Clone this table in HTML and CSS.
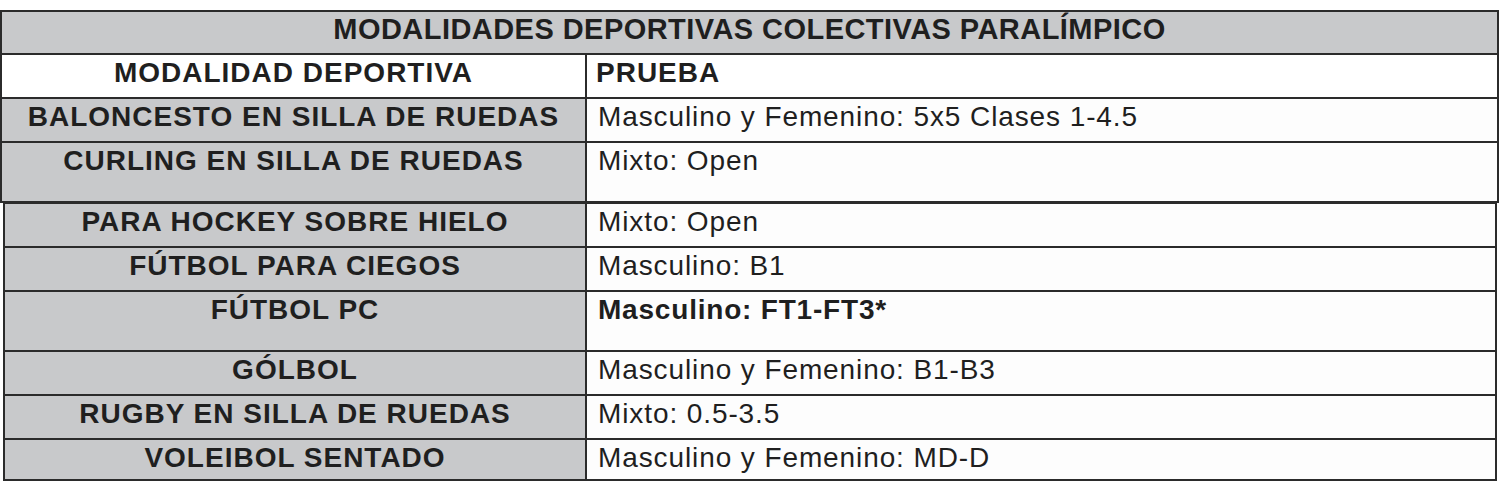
FILE: index.html
```html
<!DOCTYPE html>
<html lang="es">
<head>
<meta charset="utf-8">
<title>Modalidades deportivas colectivas paralímpico</title>
<link rel="stylesheet" href="styles.css">
</head>
<body>
<div class="page">
  <div class="grid grid-top">
    <div class="cell title">MODALIDADES DEPORTIVAS COLECTIVAS PARALÍMPICO</div>
    <div class="cell head center r-h">MODALIDAD DEPORTIVA</div>
    <div class="cell head left r-h">PRUEBA</div>
    <div class="cell sport r-n">BALONCESTO EN SILLA DE RUEDAS</div>
    <div class="cell test r-n">Masculino y Femenino: 5x5 Clases 1-4.5</div>
    <div class="cell sport r-t">CURLING EN SILLA DE RUEDAS</div>
    <div class="cell test r-t">Mixto: Open</div>
  </div>
  <div class="grid grid-bottom">
    <div class="cell sport r-n">PARA HOCKEY SOBRE HIELO</div>
    <div class="cell test r-n">Mixto: Open</div>
    <div class="cell sport r-n">FÚTBOL PARA CIEGOS</div>
    <div class="cell test r-n">Masculino: B1</div>
    <div class="cell sport r-t">FÚTBOL PC</div>
    <div class="cell test strong r-t">Masculino: FT1-FT3*</div>
    <div class="cell sport r-n">GÓLBOL</div>
    <div class="cell test r-n">Masculino y Femenino: B1-B3</div>
    <div class="cell sport r-n">RUGBY EN SILLA DE RUEDAS</div>
    <div class="cell test r-n">Mixto: 0.5-3.5</div>
    <div class="cell sport r-l">VOLEIBOL SENTADO</div>
    <div class="cell test r-l">Masculino y Femenino: MD-D</div>
  </div>
</div>
</body>
</html>
```
FILE: styles.css
```css
* { box-sizing: border-box; }
html, body {
  margin: 0;
  padding: 0;
  background: #ffffff;
}
body {
  font-family: "Liberation Sans", Arial, sans-serif;
  color: #1f1f1f;
}
.page {
  padding-top: 10px;
  width: 1500px;
  height: 484px;
}
.grid {
  display: grid;
  background: #2b2b2b;
  gap: 2px;
  padding: 2px;
}
.grid-top {
  width: 1499px;
  grid-template-columns: 583px 1fr;
}
.grid-bottom {
  width: 1494px;
  margin-left: 3px;
  margin-top: -1px;
  grid-template-columns: 580px 1fr;
}
.cell {
  font-size: 28px;
  line-height: 30px;
  padding-top: 3px;
  white-space: nowrap;
}
.r-h { height: 42px; }
.r-n { height: 42px; }
.r-t { height: 58px; }
.r-l { height: 39px; }
.title {
  grid-column: 1 / span 2;
  height: 41px;
  background: #c8c9cb;
  font-weight: 700;
  font-size: 29px;
  letter-spacing: 0.45px;
  text-align: center;
  padding-top: 2px;
}
.head {
  background: #ffffff;
  font-weight: 700;
  letter-spacing: 1px;
}
.center { text-align: center; }
.left { padding-left: 9px; }
.sport {
  background: #c8c9cb;
  font-weight: 700;
  text-align: center;
  letter-spacing: 1px;
}
.test {
  background: #fdfdfd;
  padding-left: 11px;
  letter-spacing: 0.9px;
}
.strong { font-weight: 700; letter-spacing: 0.8px; }
```
